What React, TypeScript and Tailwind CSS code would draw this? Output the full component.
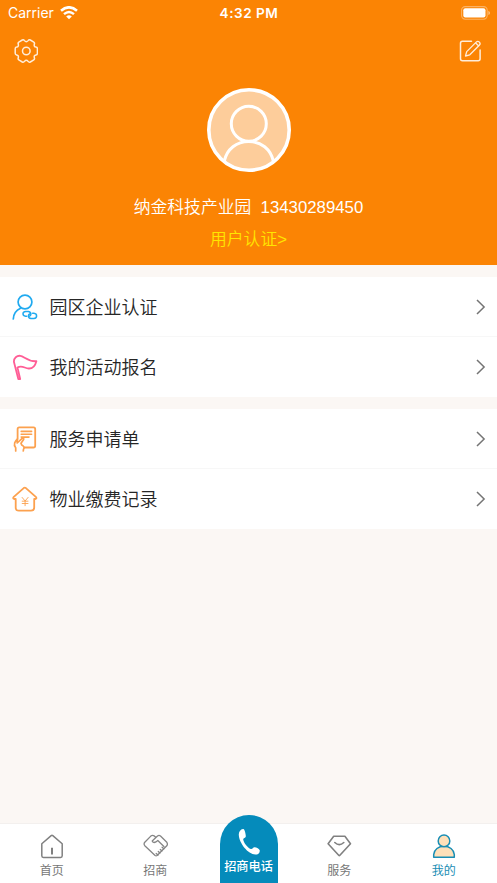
import type { ReactNode } from "react";

interface MenuItem { label: string; icon: ReactNode; }
interface TabItem { label: string; icon: ReactNode; active?: boolean; }

/* ─── Icons ─────────────────────────── */
function GearIcon() {
  return (
    <svg width="24" height="24" viewBox="-12.3 -12 24 24" fill="none" stroke="#fff" strokeOpacity="0.85" strokeWidth="1.5" strokeLinejoin="round">
      <path d="M11.1 -2.2V2.2Q11.1 3.6 9.7 3.9Q7.3 4.5 8.1 6.9Q8.5 8.3 7.5 8.9L4 11Q2.7 11.6 1.8 10.4Q0 8.2 -1.8 10.4Q-2.7 11.6 -4 11L-7.5 8.9Q-8.5 8.3 -8.1 6.9Q-7.3 4.5 -9.7 3.9Q-11.1 3.6 -11.1 2.2V-2.2Q-11.1 -3.6 -9.7 -3.9Q-7.3 -4.5 -8.1 -6.9Q-8.5 -8.3 -7.5 -8.9L-4 -11Q-2.7 -11.6 -1.8 -10.4Q0 -8.2 1.8 -10.4Q2.7 -11.6 4 -11L7.5 -8.9Q8.5 -8.3 8.1 -6.9Q7.3 -4.5 9.7 -3.9Q11.1 -3.6 11.1 -2.2Z" />
      <circle r="3.8" />
    </svg>
  );
}

function EditIcon() {
  return (
    <svg width="24" height="24" viewBox="0 0 24 24" fill="none" stroke="#fff" strokeOpacity="0.85" strokeWidth="1.5" strokeLinecap="round" strokeLinejoin="round">
      <path d="M12.5 2.2H3.5Q1.5 2.2 1.5 4.2V19.8Q1.5 21.8 3.5 21.8H19.1Q21.1 21.8 21.1 19.8V11" />
      <path d="M6.5 17L7.7 12.6L17.2 3.1Q18.8 1.5 20.4 3.1Q21.9 4.7 20.3 6.3L10.8 15.8ZM16.5 3.8L19.7 7" strokeWidth="1.3" />
    </svg>
  );
}

function WifiIcon() {
  return (
    <svg width="18" height="14" viewBox="0 0 18 14" fill="none" stroke="#fff" strokeWidth="2.6">
      <path d="M1 4.7Q9 -2.1 17 4.7" />
      <path d="M4 8.1Q9 3.7 14 8.1" strokeWidth="2.4" />
      <path d="M9 13.2L6.2 10.4Q9 8.3 11.8 10.4Z" fill="#fff" stroke="none" />
    </svg>
  );
}

function BatteryIcon() {
  return (
    <svg width="29" height="14" viewBox="0 0 29 14" fill="none">
      <rect x="0.6" y="0.6" width="25.6" height="12.6" rx="3.6" stroke="#fff" strokeOpacity="0.38" strokeWidth="1.1" />
      <rect x="2.3" y="2.3" width="22.2" height="9.2" rx="2" fill="#fff" />
      <path d="M27.4 4.7Q29 5.4 29 6.9Q29 8.4 27.4 9.1Z" fill="#fff" fillOpacity="0.5" />
    </svg>
  );
}

function Avatar() {
  return (
    <svg width="84" height="84" viewBox="0 0 84 84" fill="none" stroke="#fff">
      <circle cx="42" cy="42" r="40.2" fill="#fdcd9b" strokeWidth="3.6" />
      <circle cx="41.8" cy="35.8" r="17.5" strokeWidth="3" />
      <path d="M17.3 73C20 61 29.5 53.5 41.8 53.5C54.1 53.5 63.6 61 66.3 73" strokeWidth="3" />
    </svg>
  );
}

function CompanyIcon() {
  return (
    <svg width="26" height="28" viewBox="0 0 26 28" fill="none" stroke="#20aaf0" strokeWidth="1.7" strokeLinecap="round">
      <circle cx="13" cy="9" r="6.9" />
      <path d="M1.3 26Q1.6 18.5 8.5 15.3" />
      <g strokeWidth="1.5">
        <path d="M14.7 23.3H13.6Q11 22.9 11 20.8Q11 18.8 13.6 18.5L16.5 18.6Q19 19.2 18.9 21.2Q18.8 22.4 17.6 23.1" />
        <path d="M20.6 20.3H21.9Q24.6 20.7 24.6 22.9Q24.6 25.1 21.9 25.4H19Q16.4 25.1 16.4 22.9Q16.5 21.7 17.6 21" />
      </g>
    </svg>
  );
}

function FlagIcon() {
  return (
    <svg width="26" height="28" viewBox="0 0 26 28" fill="none" stroke="#ff5e96" strokeWidth="1.8" strokeLinecap="round" strokeLinejoin="round">
      <path d="M8.2 26H6.3L1.9 8.8C1.6 5 5 2.4 8.3 2.8C12.2 3.3 15.5 8.8 24.4 8.2C23.1 13.2 20.3 15.7 16.7 15.5C12.7 15.3 9.7 11.9 5.5 14.6L8.2 26" />
    </svg>
  );
}

function FormIcon() {
  return (
    <svg width="26" height="28" viewBox="0 0 26 28" fill="none" stroke="#fca14f" strokeWidth="1.8" strokeLinecap="round" strokeLinejoin="round">
      <path d="M5.6 14V4Q5.6 2.4 7.2 2.4H21.6Q23.2 2.4 23.2 4V20.7Q23.2 22.5 21.4 22.5H12.5" />
      <path d="M9.2 6.4H19.6M9.2 9.3H19.6M9.2 12.1H17" strokeWidth="1.6" />
      <path d="M3.7 26V22.7Q1.8 20.5 2.7 17.8Q3.7 15.8 5.3 14.2L5.2 18L10.7 12.8Q12.4 13.3 11.3 15L9 18.3L9.8 20.1Q13.3 22.1 11.5 24.2L11.3 26" strokeWidth="1.7" />
    </svg>
  );
}

function PaymentIcon() {
  return (
    <svg width="26" height="28" viewBox="0 0 26 28" fill="none" stroke="#fca14f" strokeWidth="1.8" strokeLinecap="round" strokeLinejoin="round">
      <path d="M3.7 14H2.1Q0.6 13.4 1.5 12.2L11.7 3.1Q12.8 2.3 13.9 3.1L24.1 12.2Q25 13.4 23.5 14H22.2V22.5Q22.2 25.7 19 25.7H6.9Q3.7 25.7 3.7 22.5Z" />
      <path d="M10.1 12.4L13.1 16L16.1 12.4M13.1 16V20.7M10.2 16.2H16M10.2 18.5H16" strokeWidth="0.9" />
    </svg>
  );
}

function ChevronIcon() {
  return (
    <svg width="10" height="16" viewBox="0 0 10 16" fill="none" stroke="#747474" strokeWidth="1.5">
      <path d="M1 1L8.1 8L1 15" />
    </svg>
  );
}

function HomeIcon() {
  return (
    <svg width="26" height="26" viewBox="0 0 26 26" fill="none" stroke="#808080" strokeWidth="1.5" strokeLinejoin="round">
      <path d="M2.8 10.7L12.2 2.6Q13 1.9 13.8 2.6L23.2 10.7V22.8Q23.2 24.4 21.6 24.4H4.4Q2.8 24.4 2.8 22.8Z" />
      <path d="M13 14.7V21.5" strokeWidth="2" />
    </svg>
  );
}

function HandshakeIcon() {
  return (
    <svg width="26" height="26" viewBox="-0.8 0 26 26" fill="none" stroke="#858585" strokeWidth="1.3" strokeLinecap="round" strokeLinejoin="round">
      <path d="M13 4.3L11.4 2.9Q9.7 1.8 8 3.1L2 9.2Q0.6 11 2 12.7L12.3 22.5Q13.3 23.2 14.3 22.5L24 12.8Q25.2 11 24 9.3L17.7 3Q16.2 1.8 14.7 3L9.4 8Q10.5 10.4 13.1 8.9L15 7.5L21.1 13.5" />
      <path d="M13.4 20.5L15.2 22M15.5 18.5L17.1 20M17.5 16.4L19.2 17.9M19.3 14.2L21 15.8" />
    </svg>
  );
}

function PhoneIcon() {
  return (
    <svg width="24" height="28" viewBox="0 0 24 28" fill="#fff">
      <path d="M6.4 1C7.6 1 9 6.9 8.8 8.5C8.5 10 6.2 10 6.2 11.4C6.7 14.8 10.6 19.5 13.8 21C15.4 21.7 15.8 19.2 17.5 19.2C19.6 19.4 22.3 20.8 22.7 22.2C23.2 24.7 21 26.6 18.4 26.6C11.2 26.7 1.4 14.6 1.8 6.1C2 3 4.1 1 6.4 1Z" />
    </svg>
  );
}

function DiamondIcon() {
  return (
    <svg width="26" height="26" viewBox="-0.3 0 26 26" fill="none" stroke="#808080" strokeWidth="1.6" strokeLinecap="round" strokeLinejoin="round">
      <path d="M7.4 3.2H18.6L24.2 10.7L13.6 22.3Q13 22.9 12.4 22.3L1.8 10.7Z" />
      <path d="M8.5 9.5Q13 13.9 17.5 9.5" />
    </svg>
  );
}

function UserIcon() {
  return (
    <svg width="26" height="26" viewBox="0 0 26 26" fill="#fee0b9" stroke="#188db4" strokeWidth="1.5" strokeLinejoin="round">
      <path d="M2.7 24.3V21.5C3.2 16.5 7.5 13.3 13 13.3C18.5 13.3 22.8 16.5 23.3 21.5V24.3Z" />
      <circle cx="13" cy="7.9" r="5.8" />
    </svg>
  );
}

/* ─── Page ─────────────────────────── */
const menuGroups: MenuItem[][] = [
  [
    { label: "园区企业认证", icon: <CompanyIcon /> },
    { label: "我的活动报名", icon: <FlagIcon /> },
  ],
  [
    { label: "服务申请单", icon: <FormIcon /> },
    { label: "物业缴费记录", icon: <PaymentIcon /> },
  ],
];

function MenuGroup({ items }: { items: MenuItem[] }) {
  return (
    <div className="divide-y divide-[#f7f7f7] bg-white">
      {items.map((item) => (
        <button key={item.label} className="flex h-[60px] w-full items-center pr-[11px] pl-3">
          {item.icon}
          <span className="ml-[11.5px] flex-1 pt-0.5 text-left text-lg leading-6 font-[350] text-[#262626]">{item.label}</span>
          <ChevronIcon />
        </button>
      ))}
    </div>
  );
}

function Tab({ label, icon, active }: TabItem) {
  return (
    <button className={`flex flex-1 flex-col items-center pt-[9px] text-xs leading-[18px] ${active ? "text-[#188db4]" : "text-[#777]"}`}>
      {icon}
      <span className="mt-[3px]">{label}</span>
    </button>
  );
}

export default function App() {
  return (
    <div className="flex h-screen w-full flex-col overflow-hidden bg-[#fbf7f4] font-['Liberation_Sans','Noto_Sans_CJK_SC',sans-serif]">
      <header className="flex h-[265px] shrink-0 flex-col bg-[#fb8404] text-white">
        <div className="grid h-[26px] grid-cols-3 items-center pr-[7px] pl-2 font-[Inter,sans-serif]">
          <div className="flex items-center gap-1.5 text-sm">
            <span>Carrier</span>
            <WifiIcon />
          </div>
          <span className="text-center text-[13.6px] font-semibold tracking-[0.5px]">4:32 PM</span>
          <div className="flex justify-end">
            <BatteryIcon />
          </div>
        </div>
        <div className="flex items-center justify-between pt-[13px] pr-3.5 pl-3.5">
          <button><GearIcon /></button>
          <button><EditIcon /></button>
        </div>
        <div className="flex flex-col items-center pt-[25px]">
          <Avatar />
          <p className="mt-6 text-[16.8px] leading-6 font-[350] whitespace-pre">纳金科技产业园  13430289450</p>
          <button className="mt-2 text-[16.8px] leading-6 font-[350] text-[#ffe600]">用户认证&gt;</button>
        </div>
      </header>

      <main className="flex flex-1 flex-col gap-3 pt-3">
        {menuGroups.map((items, i) => (
          <MenuGroup key={i} items={items} />
        ))}
      </main>

      <nav className="flex h-[60px] shrink-0 border-t border-[#f3f0ee] bg-white">
        <div className="flex w-[207px]">
          <Tab label="首页" icon={<HomeIcon />} />
          <Tab label="招商" icon={<HandshakeIcon />} />
        </div>
        <div className="flex w-[80px] pl-[12.5px]">
          <button className="-mt-[9px] flex h-[68px] w-[58px] shrink-0 flex-col items-center rounded-t-[29px] bg-[#058bbb] pt-[13px] text-[12.2px] leading-[18px] font-medium text-white">
            <PhoneIcon />
            <span className="mt-0.5 whitespace-nowrap">招商电话</span>
          </button>
        </div>
        <div className="flex w-[209px]">
          <Tab label="服务" icon={<DiamondIcon />} />
          <Tab label="我的" icon={<UserIcon />} active />
        </div>
      </nav>
    </div>
  );
}
